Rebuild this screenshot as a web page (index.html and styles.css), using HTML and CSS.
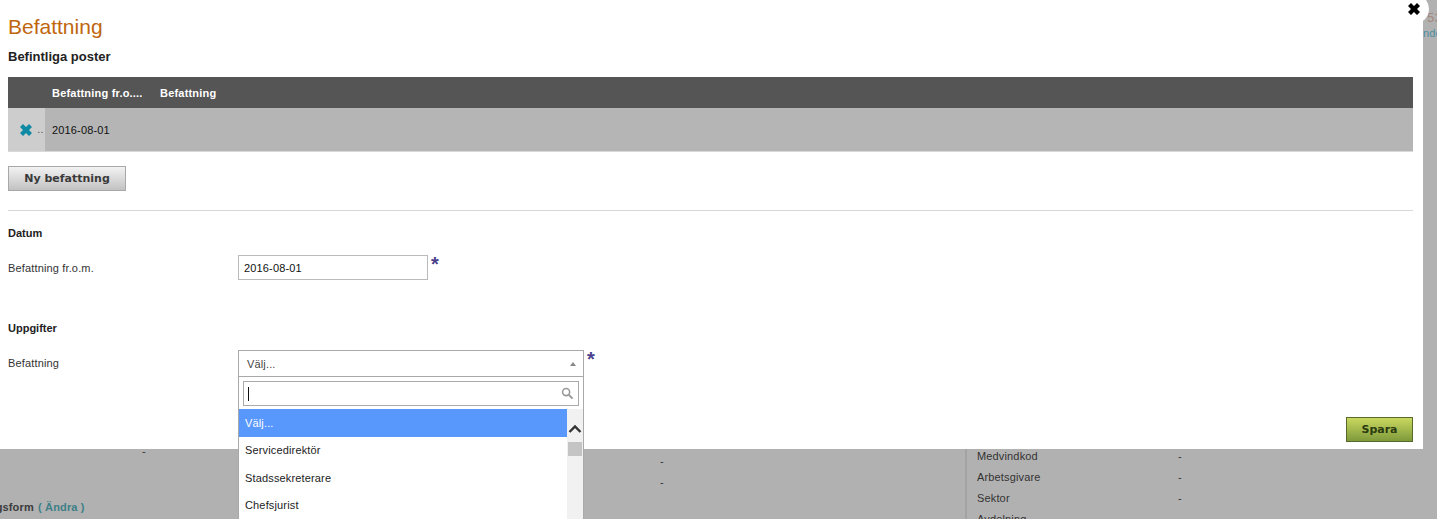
FILE: index.html
```html
<!DOCTYPE html>
<html lang="en">
<head>
  <meta charset="UTF-8" />
  <title>Befattning</title>
  <link rel="stylesheet" href="styles.css">
</head>
<body>

  <!-- page behind the dialog -->
  <div class="backdrop">
    <div class="backdrop-edge">
      <div class="edge-num">53</div>
      <div class="edge-link">nde</div>
    </div>
    <div class="backdrop-main">
      <div class="col-left">
        <div class="dash-left">-</div>
        <div class="form-line">Anställningsform <span class="change">( Ändra )</span></div>
      </div>
      <div class="col-mid">
        <div>-</div>
        <div>-</div>
      </div>
      <div class="col-right">
        <div class="info-row"><span>Medvindkod</span><span>-</span></div>
        <div class="info-row"><span>Arbetsgivare</span><span>-</span></div>
        <div class="info-row"><span>Sektor</span><span>-</span></div>
        <div class="info-row"><span>Avdelning</span><span></span></div>
      </div>
    </div>
  </div>

  <div class="dialog">
    <div class="close">
      <svg viewBox="0 0 16 16" width="16" height="16"><path d="M2 5l3-3 3 3 3-3 3 3-3 3 3 3-3 3-3-3-3 3-3-3 3-3z" fill="#000"/></svg>
    </div>

    <h1>Befattning</h1>
    <h2>Befintliga poster</h2>

    <table class="grid">
      <thead>
        <tr>
          <th class="cell-action"></th>
          <th class="cell-date">Befattning fr.o....</th>
          <th>Befattning</th>
        </tr>
      </thead>
      <tbody>
        <tr>
          <td class="cell-action">
            <svg viewBox="0 0 16 16" width="16" height="16"><path d="M2 5l3-3 3 3 3-3 3 3-3 3 3 3-3 3-3-3-3 3-3-3 3-3z" fill="#0f8aa5"/></svg>
            <span class="more">..</span>
          </td>
          <td class="cell-date">2016-08-01</td>
          <td></td>
        </tr>
      </tbody>
    </table>

    <button class="btn btn-grey">Ny befattning</button>

    <hr>

    <h3>Datum</h3>
    <div class="field field-date">
      <label>Befattning fr.o.m.</label>
      <input type="text" class="date-input" value="2016-08-01">
      <span class="req">*</span>
    </div>

    <h3 class="section-two">Uppgifter</h3>
    <div class="field field-select">
      <label>Befattning</label>
      <div class="select-wrap">
        <div class="select-box">
          <span>Välj...</span>
          <span class="arrow"></span>
        </div>
        <div class="dropdown">
          <div class="search-box">
            <span class="caret"></span>
            <svg viewBox="0 0 14 14" width="13" height="13"><circle cx="5.5" cy="5.5" r="3.8" fill="none" stroke="#999" stroke-width="1.7"/><path d="M8.5 8.5l4 4" stroke="#999" stroke-width="2.2"/></svg>
          </div>
          <div class="list">
            <ul class="options">
              <li class="active">Välj...</li>
              <li>Servicedirektör</li>
              <li>Stadssekreterare</li>
              <li>Chefsjurist</li>
            </ul>
            <div class="scrollbar">
              <svg viewBox="0 0 14 10" width="14" height="10"><path d="M1.5 8L7 2.5 12.5 8" fill="none" stroke="#333" stroke-width="2.4"/></svg>
              <div class="thumb"></div>
            </div>
          </div>
        </div>
      </div>
      <span class="req">*</span>
    </div>

    <div class="dialog-foot">
      <button class="btn btn-save">Spara</button>
    </div>
  </div>

</body>
</html>
```

FILE: styles.css
```css
html, body {
  height: 100%;
}

body {
  margin: 0;
  background-color: #b1b1b1;
  color: #222;
  font-family: "Liberation Sans", Arial, sans-serif;
  font-size: 11px;
  letter-spacing: 0.15px;
  overflow: hidden;
  position: relative;
}

/* background page */
.backdrop {
  height: 519px;
  overflow: hidden;
  color: #333;
}

.backdrop-edge {
  display: flex;
  flex-direction: column;
  align-items: flex-start;
  padding: 10px 0 0 1423px;
  height: 439px;
  box-sizing: border-box;
  white-space: nowrap;
}

.edge-num {
  color: #a5887c;
  font-size: 13px;
  margin-left: 4px;
}

.edge-link {
  color: #4b8ea3;
  margin-top: 2px;
  font-size: 11px;
}

.backdrop-main {
  display: flex;
  height: 80px;
}

.col-left {
  width: 660px;
  flex: none;
}

.dash-left {
  padding: 6px 0 0 142px;
}

.form-line {
  margin: 44px 0 0 -59px;
  font-weight: bold;
  white-space: nowrap;
  color: #3b3b3b;
}

.change {
  color: #3e7f88;
  margin-left: 1px;
}

.col-mid {
  width: 305px;
  flex: none;
  padding-top: 16px;
  box-sizing: border-box;
}

.col-mid div {
  height: 21px;
}

.col-right {
  flex: none;
  width: 300px;
  border-left: 2px solid #a3a3a3;
  padding: 11px 0 0 10px;
  box-sizing: border-box;
}

.info-row {
  display: flex;
  height: 21px;
}

.info-row span:first-child {
  width: 201px;
}

/* dialog */
.dialog {
  position: absolute;
  top: 0;
  left: 0;
  width: 1423px;
  height: 449px;
  box-sizing: border-box;
  padding: 16px 10px 0 8px;
  background: #fff;
}

.close {
  position: absolute;
  top: -6px;
  left: 1399px;
  width: 30px;
  height: 30px;
  display: flex;
  align-items: center;
  justify-content: center;
  border-radius: 50%;
  background: #fff;
}

h1 {
  margin: 0;
  font-size: 21px;
  line-height: 22px;
  font-weight: normal;
  letter-spacing: 0;
  color: #c0660f;
}

h2 {
  margin: 10px 0 12px;
  font-size: 13px;
  line-height: 17px;
  letter-spacing: 0;
  color: #222;
}

h3 {
  margin: 0;
  font-size: 11px;
  line-height: 14px;
  letter-spacing: 0;
  color: #222;
}

.grid {
  width: 100%;
  border-collapse: collapse;
  table-layout: fixed;
}

.grid th {
  height: 31px;
  padding: 0 0 0 7px;
  background-color: #555;
  color: #fff;
  text-align: left;
  font-size: 11px;
  letter-spacing: 0.2px;
}

.grid td {
  height: 43px;
  padding: 0 0 0 7px;
  background-color: #b5b5b5;
  color: #111;
  border-bottom: 1px solid #d9d9d9;
}

.grid .cell-action {
  width: 37px;
  padding: 0;
}

.grid td.cell-action {
  background-color: #cdcdcd;
  white-space: nowrap;
  padding-left: 10px;
  box-sizing: border-box;
  overflow: hidden;
}

.grid td.cell-action svg {
  vertical-align: middle;
}

.more {
  color: #555;
}

.grid .cell-date {
  width: 101px;
}

.btn {
  display: block;
  font-family: "DejaVu Sans", Verdana, sans-serif;
  font-weight: bold;
  font-size: 11px;
  cursor: pointer;
}

.btn-grey {
  width: 118px;
  height: 25px;
  margin-top: 14px;
  padding: 0;
  color: #3a3a3a;
  background: linear-gradient(#f2f2f2, #c2c2c2);
  border: 1px solid #a8a8a8;
}

hr {
  margin: 19px 0 15px;
  border: none;
  border-top: 1px solid #d8d8d8;
}

.field {
  display: flex;
  align-items: flex-start;
}

.field label {
  width: 230px;
  flex: none;
  color: #333;
}

.field-date {
  margin-top: 15px;
}

.field-date label {
  padding-top: 7px;
}

.date-input {
  width: 190px;
  height: 25px;
  box-sizing: border-box;
  padding: 0 5px;
  border: 1px solid #bbb;
  font-family: "Liberation Sans", Arial, sans-serif;
  font-size: 11px;
  letter-spacing: 0.15px;
  color: #111;
}

.req {
  margin-left: 3px;
  color: #4a3f8c;
  font-size: 20px;
  font-weight: bold;
  line-height: 18px;
}

.section-two {
  margin-top: 41px;
}

.field-select {
  margin-top: 15px;
}

.field-select label {
  padding-top: 7px;
}

.select-wrap {
  position: relative;
  width: 346px;
  flex: none;
}

.select-box {
  height: 27px;
  box-sizing: border-box;
  display: flex;
  justify-content: space-between;
  align-items: center;
  padding: 0 7px 0 8px;
  border: 1px solid #a9a9a9;
  color: #444;
  background: #fff;
}

.arrow {
  width: 0;
  height: 0;
  border-left: 3px solid transparent;
  border-right: 3px solid transparent;
  border-bottom: 4px solid #888;
}

.dropdown {
  position: absolute;
  top: 27px;
  left: 0;
  width: 346px;
  height: 160px;
  box-sizing: border-box;
  background: #fff;
  border-left: 1px solid #a9a9a9;
  border-right: 1px solid #a9a9a9;
  padding-top: 4px;
  z-index: 5;
}

.search-box {
  height: 25px;
  box-sizing: border-box;
  margin: 0 4px;
  padding: 0 4px;
  border: 1px solid #aaa;
  display: flex;
  align-items: center;
  justify-content: space-between;
}

.caret {
  width: 1px;
  height: 14px;
  background: #111;
}

.list {
  display: flex;
  margin-top: 3px;
}

.options {
  list-style: none;
  margin: 0;
  padding: 0;
  width: 328px;
  flex: none;
  color: #222;
}

.options li {
  height: 27.5px;
  line-height: 27px;
  padding-left: 6px;
}

.options li.active {
  height: 28px;
  line-height: 29px;
  background-color: #5897fb;
  color: #fff;
}

.scrollbar {
  flex: 1;
  display: flex;
  flex-direction: column;
  align-items: center;
  height: 120px;
  padding-top: 15px;
  box-sizing: border-box;
  background: #f1f1f1;
}

.thumb {
  width: 14px;
  height: 14px;
  margin-top: 8px;
  background: #c4c4c4;
}

.dialog-foot {
  position: absolute;
  right: 10px;
  bottom: 7px;
}

.btn-save {
  width: 67px;
  height: 25px;
  padding: 0;
  color: #2b3a10;
  background: linear-gradient(#c9d85f, #7f9a3c);
  border: 1px solid #56682a;
}
```
